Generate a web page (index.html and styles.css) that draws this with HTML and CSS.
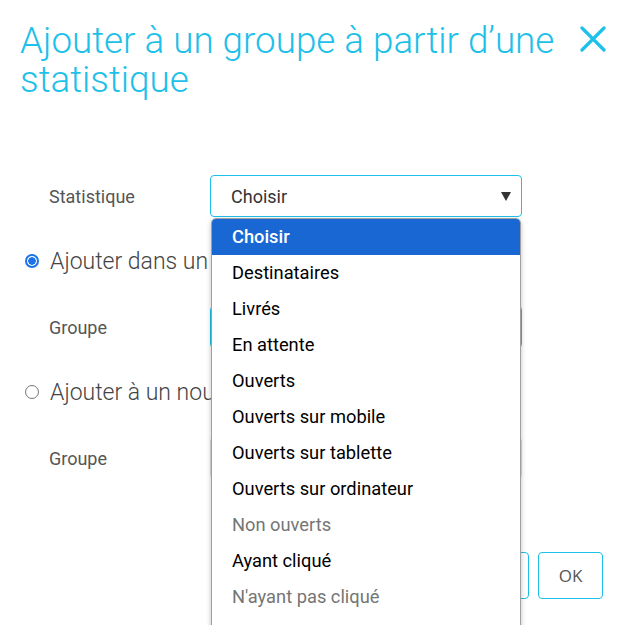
FILE: index.html
```html
<!DOCTYPE html>
<html lang="fr">
<head>
<meta charset="utf-8">
<title>Ajouter à un groupe à partir d'une statistique</title>
<link rel="stylesheet" href="styles.css">
</head>
<body>
<div class="dialog">
  <header class="head">
    <h1 class="title">Ajouter à un groupe à partir d’une statistique</h1>
    <button class="close" type="button" aria-label="Fermer">
      <svg width="26" height="26" viewBox="0 0 26 26"><path d="M2 2 L24 24 M24 2 L2 24" stroke="#1dc0e9" stroke-width="3.2" stroke-linecap="round" fill="none"/></svg>
    </button>
  </header>
  <form class="form">
    <div class="field">
      <label class="label">Statistique</label>
      <div class="select-wrap">
        <div class="select">Choisir<span class="arrow"></span></div>
        <ul class="dropdown">
          <li class="opt selected">Choisir</li>
          <li class="opt">Destinataires</li>
          <li class="opt">Livrés</li>
          <li class="opt">En attente</li>
          <li class="opt">Ouverts</li>
          <li class="opt">Ouverts sur mobile</li>
          <li class="opt">Ouverts sur tablette</li>
          <li class="opt">Ouverts sur ordinateur</li>
          <li class="opt disabled">Non ouverts</li>
          <li class="opt">Ayant cliqué</li>
          <li class="opt disabled">N'ayant pas cliqué</li>
        </ul>
      </div>
    </div>
    <div class="radio-row">
      <span class="radio checked"></span>
      <span class="radio-label">Ajouter dans un groupe existant</span>
    </div>
    <div class="field">
      <label class="label">Groupe</label>
      <div class="input active"></div>
    </div>
    <div class="radio-row">
      <span class="radio"></span>
      <span class="radio-label">Ajouter à un nouveau groupe</span>
    </div>
    <div class="field">
      <label class="label">Groupe</label>
      <div class="input"></div>
    </div>
    <div class="actions">
      <button class="btn" type="button">Annuler</button>
      <button class="btn" type="button">OK</button>
    </div>
  </form>
</div>
</body>
</html>
```
FILE: styles.css
```css
html, body {
  margin: 0;
  padding: 0;
  background: #fff;
  font-family: Roboto, "Liberation Sans", sans-serif;
  overflow: hidden;
}
.dialog {
  width: 626px;
  height: 625px;
  padding: 21px 20px 0 20px;
  box-sizing: border-box;
  overflow: hidden;
}
.head {
  display: flex;
  justify-content: space-between;
  align-items: flex-start;
}
.title {
  margin: 0;
  font-weight: 300;
  font-size: 36.8px;
  line-height: 39px;
  color: #1dc0e9;
  width: 552px;
}
.close {
  border: 0;
  background: none;
  padding: 0;
  margin: 5px 0 0 0;
  width: 26px;
  height: 26px;
  cursor: pointer;
}
.form {
  margin-top: 76px;
  display: flex;
  flex-direction: column;
}
.field {
  display: flex;
  align-items: center;
  padding-left: 29px;
  height: 42px;
}
.label {
  width: 161px;
  font-size: 18px;
  color: #555;
}
.select-wrap {
  position: relative;
  width: 312px;
}
.select {
  box-sizing: border-box;
  height: 42px;
  border: 1px solid #1dc0e9;
  border-radius: 4px;
  padding-left: 20px;
  display: flex;
  align-items: center;
  font-size: 18px;
  color: #333;
  position: relative;
}
.arrow {
  position: absolute;
  right: 10px;
  top: 16px;
  width: 0;
  height: 0;
  border-left: 5px solid transparent;
  border-right: 5px solid transparent;
  border-top: 9px solid #333;
}
.dropdown {
  position: absolute;
  top: calc(100% + 1px);
  left: 1px;
  right: 1px;
  margin: 0;
  padding: 0 0 40px 0;
  list-style: none;
  background: #fff;
  border: 1px solid #a0a0a0;
  border-radius: 5px 5px 0 0;
  box-shadow: 0 2px 5px rgba(0, 0, 0, 0.25);
  z-index: 5;
  overflow: hidden;
}
.opt {
  height: 36px;
  line-height: 36px;
  padding-left: 20px;
  font-size: 18.3px;
  font-weight: 400;
  color: #000;
}
.opt.selected {
  background: #1967d2;
  color: #fff;
  font-weight: 500;
}
.opt.disabled {
  color: #757575;
}
.radio-row {
  display: flex;
  align-items: center;
  height: 30px;
  margin-top: 29px;
  margin-bottom: 30px;
  padding-left: 5px;
  white-space: nowrap;
}
.radio {
  box-sizing: border-box;
  width: 14px;
  height: 14px;
  border-radius: 50%;
  border: 1px solid #777;
  margin-right: 11px;
  background: #fff;
}
.radio.checked {
  border: 2px solid #1a73e8;
  background: radial-gradient(circle, #1a73e8 0 3.5px, #fff 4px);
}
.radio-label {
  font-size: 23px;
  font-weight: 300;
  color: #444;
}
.input {
  box-sizing: border-box;
  width: 312px;
  height: 42px;
  border: 1px solid #ddd;
  border-radius: 4px;
}
.input.active {
  border-color: #1dc0e9;
}
.actions {
  display: flex;
  justify-content: flex-end;
  gap: 9px;
  margin-top: 73px;
  padding-right: 3px;
}
.btn {
  height: 47px;
  min-width: 65px;
  padding: 0 18px;
  box-sizing: border-box;
  border: 1px solid #1dc0e9;
  border-radius: 4px;
  background: #fff;
  font-family: "Open Sans", Roboto, sans-serif;
  font-size: 17px;
  color: #555;
}
```
